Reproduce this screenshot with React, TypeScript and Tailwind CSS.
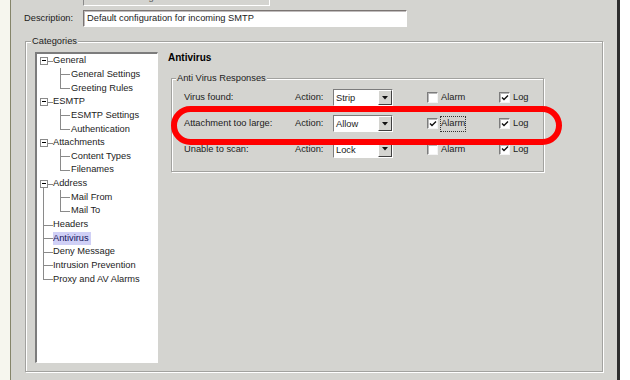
import React from "react";

type Node = {
  label: string;
  level: 0 | 1;
  box?: boolean;
  last?: boolean;
  root?: "none" | "bottom" | "full" | "top";
  selected?: boolean;
};

const TREE: Node[] = [
  { label: "General", level: 0, box: true, root: "none" },
  { label: "General Settings", level: 1, root: "none" },
  { label: "Greeting Rules", level: 1, last: true, root: "none" },
  { label: "ESMTP", level: 0, box: true, root: "none" },
  { label: "ESMTP Settings", level: 1, root: "none" },
  { label: "Authentication", level: 1, last: true, root: "none" },
  { label: "Attachments", level: 0, box: true, root: "none" },
  { label: "Content Types", level: 1, root: "none" },
  { label: "Filenames", level: 1, last: true, root: "none" },
  { label: "Address", level: 0, box: true, root: "bottom" },
  { label: "Mail From", level: 1, root: "full" },
  { label: "Mail To", level: 1, last: true, root: "full" },
  { label: "Headers", level: 0, root: "full" },
  { label: "Antivirus", level: 0, root: "full", selected: true },
  { label: "Deny Message", level: 0, root: "full" },
  { label: "Intrusion Prevention", level: 0, root: "full" },
  { label: "Proxy and AV Alarms", level: 0, root: "top" },
];

const RESPONSES = [
  { label: "Virus found:", action: "Strip", alarm: false, log: true },
  { label: "Attachment too large:", action: "Allow", alarm: true, log: true, focus: true },
  { label: "Unable to scan:", action: "Lock", alarm: false, log: true },
];

function TreeRow({ node }: { node: Node }) {
  const rootTop = node.root === "full" || node.root === "top";
  const rootBottom = node.root === "full" || node.root === "bottom";
  return (
    <div className="flex h-[13.65px] items-center">
      <div className="relative h-full w-[16px] shrink-0">
        {node.level === 0 && node.root !== "none" && rootTop && (
          <span className="absolute left-[6px] top-0 h-1/2 w-px bg-[#8a8a8a]" />
        )}
        {rootBottom && (
          <span className="absolute bottom-0 left-[6px] top-1/2 w-px bg-[#8a8a8a]" />
        )}
        {node.level === 1 && node.root === "full" && (
          <span className="absolute bottom-0 left-[6px] top-0 w-px bg-[#8a8a8a]" />
        )}
        {node.level === 0 && (
          <span className="absolute left-[6px] right-0 top-1/2 h-px bg-[#8a8a8a]" />
        )}
        {node.box && (
          <span className="absolute left-[3px] top-1/2 flex h-[8px] w-[8px] -translate-y-1/2 items-center justify-center border border-[#8a8a8a] bg-white">
            <span className="h-px w-[4px] bg-black" />
          </span>
        )}
      </div>
      {node.level === 1 && (
        <div className="relative h-full w-[17px] shrink-0">
          <span
            className={`absolute left-[7px] top-0 w-px bg-[#8a8a8a] ${node.last ? "h-1/2" : "h-full"}`}
          />
          <span className="absolute left-[7px] right-0 top-1/2 h-px bg-[#8a8a8a]" />
        </div>
      )}
      <span
        className={`whitespace-nowrap leading-[13px] ${
          node.selected ? "bg-[#d0d0f6] pr-[2px] text-[#14145a]" : ""
        } ${node.level === 1 ? "pl-[1px]" : ""}`}
      >
        {node.label}
      </span>
    </div>
  );
}

function Checkbox({ checked }: { checked: boolean }) {
  return (
    <span className="flex h-[11px] w-[11px] shrink-0 items-center justify-center border border-b-[#f4f4f4] border-l-[#7c7c7c] border-r-[#f4f4f4] border-t-[#7c7c7c] bg-white shadow-[inset_1px_1px_0_#b8b8b8]">
      {checked && (
        <svg width="8" height="8" viewBox="0 0 8 8">
          <path d="M1 3.5 L3 5.5 L7 1.5" fill="none" stroke="#111" strokeWidth="1.4" />
        </svg>
      )}
    </span>
  );
}

function Select({ value }: { value: string }) {
  return (
    <div className="flex h-[17px] w-[60px] border border-b-white border-l-[#7c7c7c] border-r-white border-t-[#7c7c7c] bg-white">
      <span className="flex-1 pl-[2px] pt-[2px] leading-[12px]">{value}</span>
      <span className="flex w-[14px] items-center justify-center border border-b-[#404040] border-l-white border-r-[#404040] border-t-white bg-[#d4d4d0]">
        <svg width="6" height="4" viewBox="0 0 6 4">
          <path d="M0 0 H6 L3 3.5 Z" fill="#111" />
        </svg>
      </span>
    </div>
  );
}

export default function App() {
  return (
    <div className="flex h-[380px] w-[630px] overflow-hidden bg-white font-['Liberation_Sans',Arial,sans-serif] text-[9.3px] text-[#1c1c1c]">
      <div className="w-[10px] shrink-0 bg-[#f6f6ee]" />
      <div className="w-px shrink-0 bg-[#85856a]" />
      <div className="relative flex w-[606px] shrink-0 flex-col bg-[#d4d4d0]">
        <div className="-mt-[11px] ml-[72px] h-[17px] w-[187px] border border-b-white border-l-[#8a8a8a] border-r-white border-t-[#8a8a8a] pl-[3px] leading-[14px] text-[#555]">
          SMTP-Incoming
        </div>

        <div className="mt-[4px] flex h-[17px] items-center">
          <span className="w-[72px] pl-[13px]">Description:</span>
          <div className="h-[17px] w-[324px] border border-b-white border-l-[#7a7472] border-r-white border-t-[#7a7472] bg-white pl-[3px] leading-[14px] shadow-[inset_1px_1px_0_#c0bcbc]">
            Default configuration for incoming SMTP
          </div>
        </div>

        <div className="relative ml-[14px] mt-[14px] h-[331px] w-[578px] border border-[#a2a29f] shadow-[inset_1px_1px_0_#fff,1px_1px_0_#fff]">
          <span className="absolute -top-[7px] left-[5px] bg-[#d4d4d0] px-[1px] leading-[12px]">
            Categories
          </span>
          <div className="flex pl-[9px] pt-[10px]">
            <div className="h-[311px] w-[123px] border-b border-l-2 border-r border-t-2 border-b-white border-l-[#7c7c7c] border-r-white border-t-[#7c7c7c] bg-white">
              {TREE.map((n) => (
                <TreeRow key={n.label} node={n} />
              ))}
            </div>

            <div className="ml-[10px] flex flex-col">
              <span className="text-[10px] font-bold leading-[12px] text-black">Antivirus</span>
              <div className="relative ml-[3px] mt-[14px] h-[94px] w-[373px] border border-[#a2a29f] pt-[6px] shadow-[inset_1px_1px_0_#fff,1px_1px_0_#fff]">
                <span className="absolute -top-[7px] left-[4px] bg-[#d4d4d0] px-[1px] leading-[12px]">
                  Anti Virus Responses
                </span>
                {RESPONSES.map((r) => (
                  <div key={r.label} className="flex h-[25.8px] items-center pl-[12px]">
                    <span className="w-[111px]">{r.label}</span>
                    <span className="w-[38px]">Action:</span>
                    <Select value={r.action} />
                    <span className="w-[34px]" />
                    <div className="flex w-[72px] items-center gap-[3px]">
                      <Checkbox checked={r.alarm} />
                      <span className={r.focus ? "outline-1 outline-dotted outline-[#333]" : ""}>Alarm</span>
                    </div>
                    <div className="flex items-center gap-[3px]">
                      <Checkbox checked={r.log} />
                      <span>Log</span>
                    </div>
                  </div>
                ))}
              </div>
            </div>
          </div>
        </div>

        <div className="pointer-events-none absolute left-[160px] top-[106px] h-[39px] w-[391px] rounded-full border-[6px] border-[#ff0000]" />
      </div>
      <div className="w-[3px] shrink-0 bg-[#2e2e2e]" />
      <div className="flex-1 bg-white" />
    </div>
  );
}
